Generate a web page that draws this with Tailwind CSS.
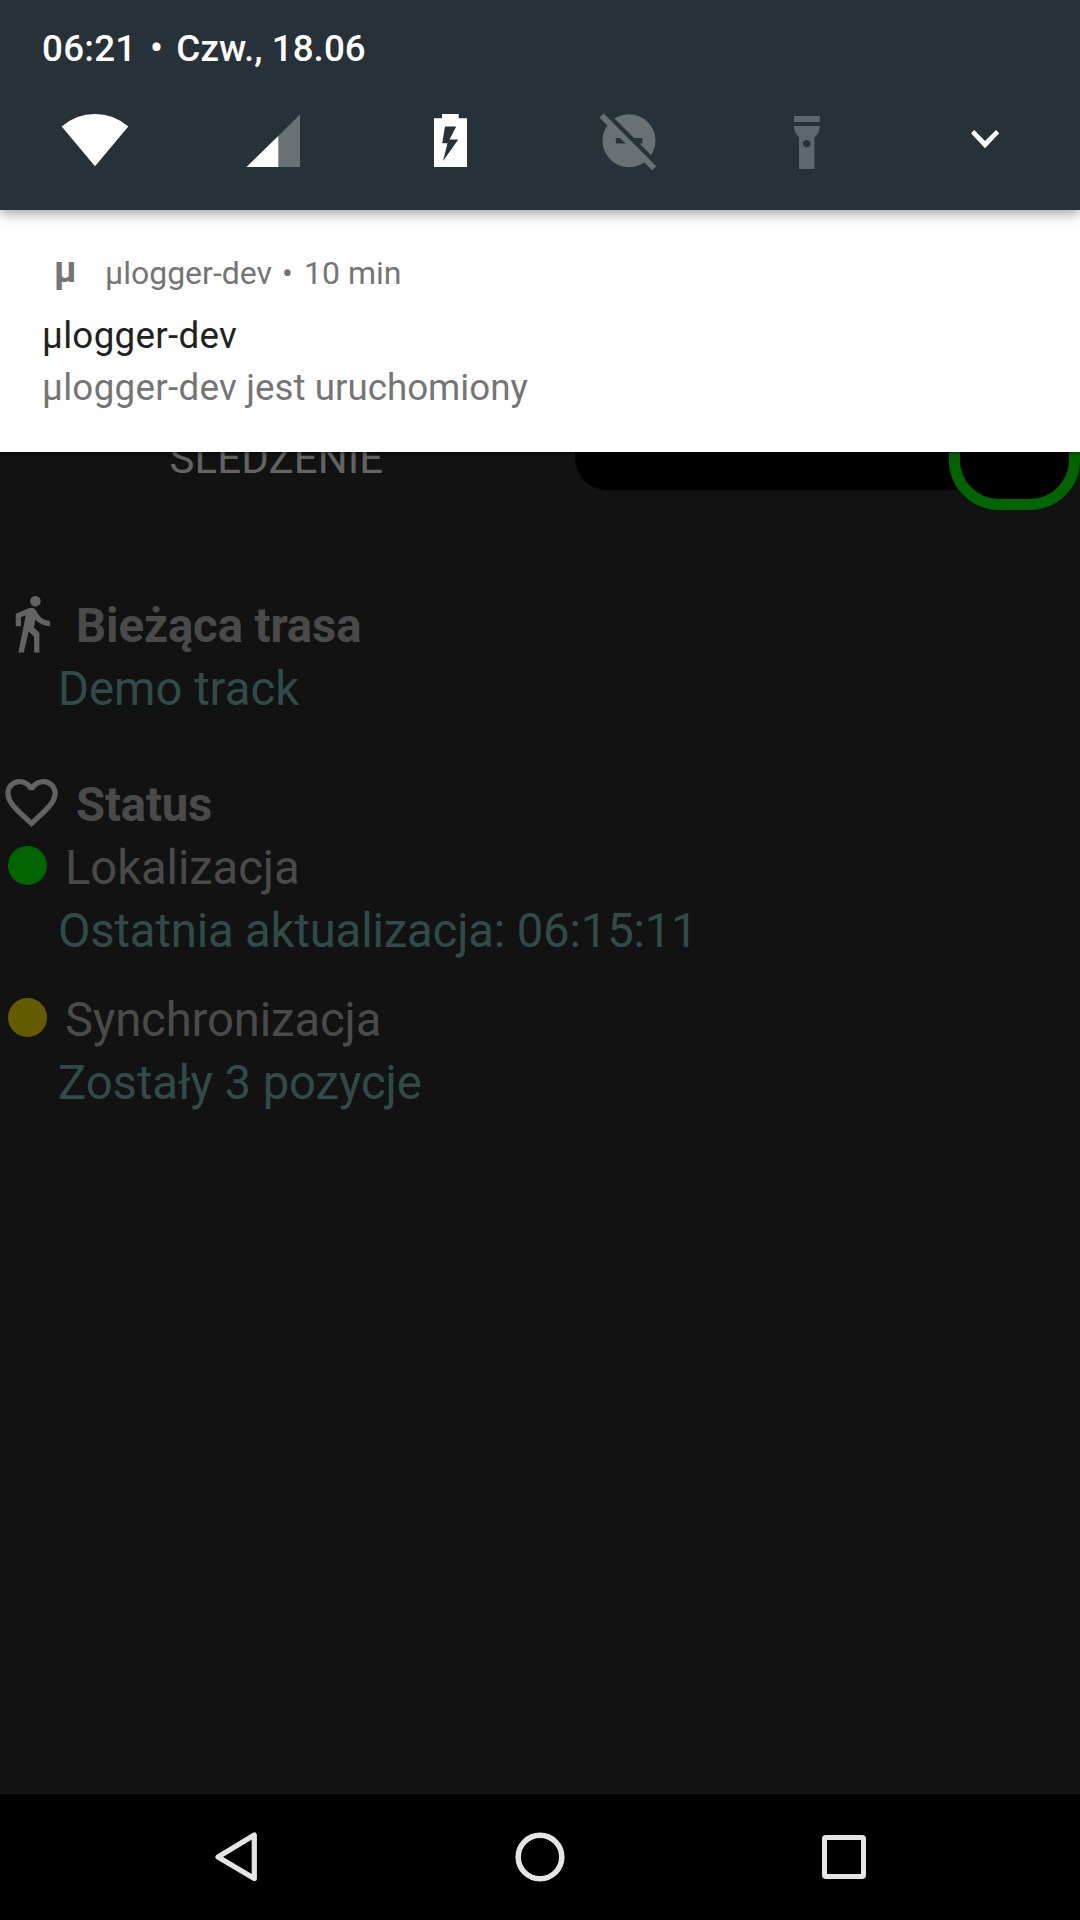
<!DOCTYPE html>
<html lang="pl">
<head>
<meta charset="utf-8">
<title>µlogger</title>
<script src="https://cdn.jsdelivr.net/npm/@tailwindcss/browser@4"></script>
</head>
<body class="bg-[#121212]">
<div class="flex h-[1920px] w-[1080px] flex-col overflow-hidden bg-[#121212] font-[Roboto,sans-serif] whitespace-nowrap">

  <!-- Quick settings -->
  <header class="relative z-20 h-[210px] shrink-0 bg-[#273238] shadow-[0_3px_12px_rgba(0,0,0,0.4)]">
    <div class="flex h-[105px] px-[42px] pt-[24px] text-[36.75px] leading-[49px] font-medium text-white"><span class="tracking-[0.25px]">06:21</span><span class="-mt-px px-[13.500px]">•</span><span class="tracking-[0.05px]">Czw., 18.06</span></div>
    <div class="grid grid-cols-6 justify-items-center px-[6px]">
      <svg class="size-[72px]" viewBox="59 105 72 72"><path fill="#fff" d="M95 166.3 61.7 126.5Q76 114 95 114t33.3 12.500z"/></svg>
      <svg class="size-[72px]" viewBox="237 105 72 72"><path fill="#697174" d="M300 114.500V167h-53.500z"/><path fill="#fff" d="M278.300 136v31h-31.800z"/></svg>
      <svg class="size-[72px]" viewBox="415 105 72 72"><path fill="#fff" fill-rule="evenodd" d="M442 114h16.700v4.300H467V167h-33v-48.700h8zM445 126.500l-2.800 16.800h5.300L443 161l15.300-21.500H449.500l6.700-13z"/></svg>
      <svg class="size-[72px]" viewBox="593 105 72 72">
        <circle cx="629" cy="140.700" r="26.500" fill="#697174"/>
        <path fill="#273238" d="M615.800 138h26.500v5.500h-26.500zM598 112l8-2 58 58-6 4z"/>
        <path fill="#697174" d="M603.700 113.500l52.500 52.700-4 4-52.700-52.700z"/>
      </svg>
      <svg class="size-[72px]" viewBox="771 105 72 72"><path fill="#5e676d" fill-rule="evenodd" d="M794 116h25.700v6H794zM794 126h25.700c0 5-1.700 8.500-5.200 11v32H799v-32c-3.300-2.500-5-6-5-11zM806.700 139.900a3.800 3.800 0 1 0 .01 0z"/></svg>
      <svg class="size-[72px]" viewBox="949 105 72 72"><path fill="#fff" d="M971 133.200l3.200-3.200L985 141l11-11 3.200 3.200L985 148.200z"/></svg>
    </div>
  </header>

  <!-- Notification -->
  <section class="relative z-10 h-[242px] shrink-0 bg-white px-[42px] pt-[42px] text-[#757575] shadow-[0_1px_4px_rgba(0,0,0,0.5)]">
    <div class="flex h-[42px] text-[32px] leading-[43px]"><span class="w-[63px] pl-[12px] text-[37px] leading-[35px] font-bold">µ</span><span class="w-[168px]">µlogger-dev</span><span class="w-[31px] pl-[9px]">•</span><span>10 min</span></div>
    <div class="mt-[16px] text-[36.75px] leading-[52px] tracking-[0.3px] text-[#212121]">µlogger-dev</div>
    <div class="text-[36.75px] leading-[52px]"><span class="tracking-[0.3px]">µlogger-dev</span> jest uruchomiony</div>
  </section>

  <!-- Tracking switch and status -->
  <main class="flex-1 text-[47.25px] leading-[63px] text-[#4a4a4a]">
    <div class="flex h-[143px] items-start">
      <div class="-mt-[19px] w-[575px] pl-[169.500px] text-[42px] leading-[52px] tracking-[0.1px] text-[#636363]">ŚLEDZENIE</div>
      <div class="-mt-[62px] h-[100px] w-[505px] rounded-[32px] bg-black"><div class="ml-auto h-[120px] w-[131px] rounded-[50px] border-[11px] border-[#006400] bg-black"></div></div>
    </div>
    <div class="flex h-[63px] items-start"><svg class="-mt-[3px] size-[63px] shrink-0" viewBox="0 0 24 24" fill="#636363"><path d="M13.500 5.500c1.100 0 2-.9 2-2s-.9-2-2-2-2 .9-2 2 .9 2 2 2zM9.800 8.900L7 23h2.100l1.800-8 2.100 2v6h2v-7.500l-2.100-2 .6-3C14.800 12 16.800 13 19 13v-2c-1.900 0-3.500-1-4.300-2.400l-1-1.600c-.4-.6-1-1-1.700-1-.3 0-.5.100-.8.100L6 8.300V13h2V9.600l1.800-.7"/></svg><b class="pl-[13px] font-bold tracking-[-0.08px]">Bieżąca trasa</b></div>
    <div class="pl-[58px] text-[#2f4c4b]">Demo track</div>

    <div class="mt-[53px] flex h-[63px] items-start"><svg class="-mt-[3px] size-[63px] shrink-0" viewBox="0 0 24 24" fill="#636363"><path d="M16.500 3c-1.740 0-3.410.81-4.500 2.090C10.910 3.810 9.240 3 7.500 3 4.420 3 2 5.420 2 8.500c0 3.780 3.400 6.860 8.550 11.540L12 21.350l1.450-1.320C18.600 15.360 22 12.280 22 8.500 22 5.420 19.580 3 16.500 3zm-4.400 15.550l-.1.100-.1-.1C7.140 14.240 4 11.390 4 8.500 4 6.500 5.500 5 7.500 5c1.540 0 3.040.99 3.570 2.360h1.870C13.460 5.990 14.960 5 16.500 5c2 0 3.500 1.500 3.500 3.500 0 2.890-3.140 5.740-7.900 10.050z"/></svg><b class="pl-[13px] font-bold tracking-[-0.15px]">Status</b></div>
    <div class="flex h-[63px] pl-[8px]"><i class="mt-[9px] mr-[18px] size-[39px] rounded-full bg-[#006400]"></i><span class="tracking-[-0.12px]">Lokalizacja</span></div>
    <div class="pl-[58px] tracking-[-0.16px] text-[#2f4c4b]">Ostatnia aktualizacja: 06:15:11</div>
    <div class="mt-[26px] flex h-[63px] pl-[8px]"><i class="mt-[9px] mr-[18px] size-[39px] rounded-full bg-[#645a00]"></i><span class="tracking-[-0.14px]">Synchronizacja</span></div>
    <div class="pl-[58px] tracking-[-0.08px] text-[#2f4c4b]">Zostały 3 pozycje</div>
  </main>

  <!-- Navigation bar -->
  <nav class="flex h-[126px] shrink-0 items-center justify-center gap-[240px] bg-black">
    <svg class="size-[64px]" viewBox="204 1825 64 64" fill="none" stroke="#e5e5e5" stroke-width="5.200" stroke-linejoin="round"><path d="M254.300 1835v43.500L218 1857z"/></svg>
    <svg class="size-[64px]" viewBox="508 1825 64 64" fill="none" stroke="#e5e5e5" stroke-width="5.500"><circle cx="540" cy="1857" r="21.800"/></svg>
    <svg class="size-[64px]" viewBox="812 1825 64 64" fill="none" stroke="#e5e5e5" stroke-width="5"><rect x="824.500" y="1837.500" width="39" height="39" rx="1.500"/></svg>
  </nav>
</div>
</body>
</html>
